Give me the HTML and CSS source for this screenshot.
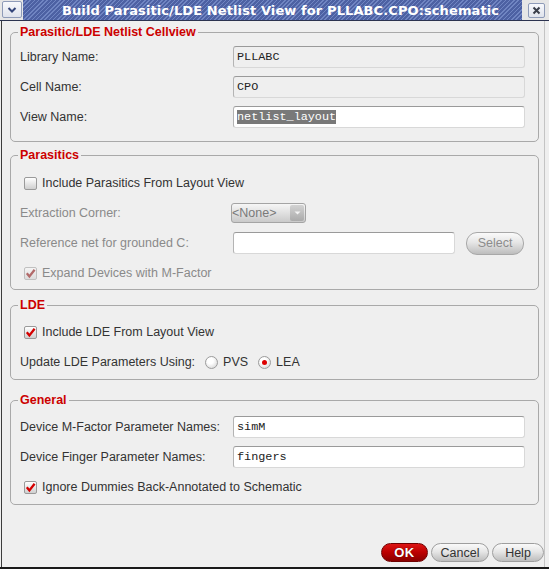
FILE: index.html
```html
<!DOCTYPE html>
<html>
<head>
<meta charset="utf-8">
<title>Build Parasitic/LDE Netlist View</title>
<link rel="stylesheet" href="styles.css">
</head>
<body>
<div class="window">
  <div class="titlebar">
    <div class="tb-btn menu-btn">
      <svg width="12" height="8" viewBox="0 0 12 8"><path d="M2.5 2 L6 5.5 L9.5 2" fill="none" stroke="#34467a" stroke-width="2"/></svg>
    </div>
    <div class="tb-band"><span class="tb-title">Build Parasitic/LDE Netlist View for PLLABC.CPO:schematic</span></div>
    <div class="tb-btn close-btn">
      <svg width="9" height="9" viewBox="0 0 9 9"><path d="M1.5 1.5 L7.5 7.5 M7.5 1.5 L1.5 7.5" fill="none" stroke="#3a3f4a" stroke-width="2"/></svg>
    </div>
  </div>

  <div class="content">
    <fieldset class="group g1">
      <legend>Parasitic/LDE Netlist Cellview</legend>
      <div class="row"><span class="label">Library Name:</span><div class="field readonly">PLLABC</div></div>
      <div class="row"><span class="label">Cell Name:</span><div class="field readonly">CPO</div></div>
      <div class="row"><span class="label">View Name:</span><div class="field"><span class="sel">netlist_layout</span></div></div>
    </fieldset>

    <fieldset class="group g2">
      <legend>Parasitics</legend>
      <div class="row">
        <span class="check"></span><span class="check-text">Include Parasitics From Layout View</span>
      </div>
      <div class="row disabled">
        <span class="label">Extraction Corner:</span>
        <div class="combo"><span class="combo-text">&lt;None&gt;</span><span class="combo-arrow"><svg width="7" height="4" viewBox="0 0 7 4"><path d="M0.5 0.5 L6.5 0.5 L3.5 3.5 Z" fill="#f4f4f4"/></svg></span></div>
      </div>
      <div class="row disabled">
        <span class="label">Reference net for grounded C:</span>
        <div class="field short"></div>
        <div class="pill select-btn">Select</div>
      </div>
      <div class="row disabled">
        <span class="check checked faded"><svg width="11" height="11" viewBox="0 0 11 11"><path d="M1.8 5.2 L4.4 8.4 L9.6 1.8" fill="none" stroke="#b26a6a" stroke-width="2.3"/></svg></span><span class="check-text">Expand Devices with M-Factor</span>
      </div>
    </fieldset>

    <fieldset class="group g3">
      <legend>LDE</legend>
      <div class="row">
        <span class="check checked"><svg width="11" height="11" viewBox="0 0 11 11"><path d="M1.8 5.2 L4.4 8.4 L9.6 1.8" fill="none" stroke="#d40000" stroke-width="2.3"/></svg></span><span class="check-text">Include LDE From Layout View</span>
      </div>
      <div class="row">
        <span class="inline-label">Update LDE Parameters Using:</span>
        <span class="radio"></span><span class="radio-text">PVS</span>
        <span class="radio on"></span><span class="radio-text">LEA</span>
      </div>
    </fieldset>

    <fieldset class="group g4">
      <legend>General</legend>
      <div class="row"><span class="label">Device M-Factor Parameter Names:</span><div class="field">simM</div></div>
      <div class="row"><span class="label">Device Finger Parameter Names:</span><div class="field">fingers</div></div>
      <div class="row">
        <span class="check checked"><svg width="11" height="11" viewBox="0 0 11 11"><path d="M1.8 5.2 L4.4 8.4 L9.6 1.8" fill="none" stroke="#d40000" stroke-width="2.3"/></svg></span><span class="check-text">Ignore Dummies Back-Annotated to Schematic</span>
      </div>
    </fieldset>

    <div class="buttons">
      <div class="pill ok-btn">OK</div>
      <div class="pill cancel-btn">Cancel</div>
      <div class="pill help-btn">Help</div>
    </div>
  </div>
</div>
</body>
</html>
```

FILE: styles.css
```css
html, body {
  margin: 0;
  padding: 0;
  background: #efefef;
}

.window {
  width: 549px;
  height: 569px;
  display: flex;
  flex-direction: column;
  box-sizing: border-box;
  border-bottom: 2px solid #1a1a1a;
  font-family: "Liberation Sans", Arial, sans-serif;
  font-size: 12.5px;
  color: #333333;
}

/* ---------- title bar ---------- */
.titlebar {
  height: 20px;
  display: flex;
  align-items: stretch;
  background: #e6e6e6;
  border-bottom: 1px solid #2c3350;
  flex: none;
}

.tb-btn {
  box-sizing: border-box;
  display: flex;
  align-items: center;
  justify-content: center;
  border: 1px solid #8e9bb8;
  border-radius: 2px;
  background: linear-gradient(#f8f9fc, #dfe3ec);
}

.menu-btn {
  width: 20px;
  height: 17px;
  margin: 1px 1px 0 2px;
}

.close-btn {
  width: 17px;
  height: 15px;
  margin: 3px 4px 0 6px;
}

.tb-band {
  flex: 1;
  background: repeating-linear-gradient(135deg, #4d61a3 0 1.9px, #7085c2 1.9px 3px);
  display: flex;
  align-items: center;
  padding-left: 39px;
}

.tb-title {
  font-family: "DejaVu Sans", sans-serif;
  font-weight: bold;
  font-size: 13px;
  letter-spacing: 0.1px;
  color: #ffffff;
  white-space: nowrap;
  padding-top: 1px;
}

/* ---------- content ---------- */
.content {
  flex: 1;
  display: flex;
  flex-direction: column;
  margin-left: 1px;
  border-left: 1px solid #3c3c3c;
  margin-right: 4px;
  border-right: 1px solid #c4c4c4;
  padding: 4px 5px 5px 8px;
}

.group {
  margin: 0;
  border: 1px solid #a9a9a9;
  border-radius: 5px;
  padding: 4px 12px 2px 9px;
}

.group legend {
  font-weight: bold;
  color: #cc0000;
  line-height: 15px;
  padding: 0 2px;
  margin-left: -2px;
}

.g1 { padding-top: 2px; padding-bottom: 9px; }
.g2 { margin-top: 6px; padding-top: 5px; padding-bottom: 1px; }
.g3 { margin-top: 8px; }
.g4 { margin-top: 13px; }

.row {
  height: 30px;
  display: flex;
  align-items: center;
  white-space: nowrap;
}

.label {
  width: 213px;
  flex: none;
}

.disabled {
  color: #8a8a8a;
}

/* ---------- text fields ---------- */
.field {
  box-sizing: border-box;
  width: 292px;
  height: 22px;
  background: #ffffff;
  border: 1px solid #d8d8d8;
  border-top-color: #9a9a9a;
  border-left-color: #b4b4b4;
  border-radius: 3px;
  padding: 0 3px;
  font-family: "Liberation Mono", "Courier New", monospace;
  font-size: 11.8px;
  line-height: 20px;
  color: #222222;
}

.field.readonly {
  background: #efefef;
}

.field.short {
  width: 222px;
}

.sel {
  background: #797979;
  color: #ffffff;
}

/* ---------- checkbox ---------- */
.check {
  box-sizing: border-box;
  width: 13px;
  height: 13px;
  margin-left: 4px;
  margin-right: 5px;
  border: 1px solid #9a9a9a;
  border-radius: 2px;
  background: linear-gradient(#ffffff, #cfcfcf);
  display: flex;
  align-items: center;
  justify-content: center;
  flex: none;
}

.check.faded {
  border-color: #c0c0c0;
  background: linear-gradient(#f4f4f4, #dcdcdc);
}

/* ---------- radio ---------- */
.inline-label {
  margin-right: 10px;
}

.radio {
  box-sizing: border-box;
  width: 13px;
  height: 13px;
  border-radius: 50%;
  border: 1px solid #9c9c9c;
  background: radial-gradient(circle at 40% 35%, #ffffff 30%, #cdcdcd 100%);
  margin-right: 5px;
  display: flex;
  align-items: center;
  justify-content: center;
  flex: none;
}

.radio.on::after {
  content: "";
  width: 5px;
  height: 5px;
  border-radius: 50%;
  background: #dd0000;
}

.radio-text {
  margin-right: 10px;
}

/* ---------- combo ---------- */
.combo {
  box-sizing: border-box;
  width: 75px;
  height: 20px;
  margin-left: -2px;
  border: 1px solid #a4a4a4;
  border-radius: 3px;
  background: linear-gradient(#f6f6f6, #cacaca);
  display: flex;
  align-items: center;
  justify-content: space-between;
  padding: 0 1px 0 0;
}

.combo-text {
  color: #7a7a7a;
  line-height: 16px;
}

.combo-arrow {
  width: 14px;
  height: 16px;
  border-radius: 2px;
  background: linear-gradient(#d2d2d2, #aaaaaa);
  display: flex;
  align-items: center;
  justify-content: center;
}

/* ---------- pill buttons ---------- */
.pill {
  box-sizing: border-box;
  height: 19px;
  border-radius: 10px;
  border: 1px solid #9e9e9e;
  background: linear-gradient(#fafafa, #e6e6e6 45%, #bdbdbd);
  display: flex;
  align-items: center;
  justify-content: center;
  color: #333333;
}

.select-btn {
  width: 58px;
  height: 23px;
  margin-left: 11px;
  border-radius: 11px;
  color: #8c8c8c;
  border-color: #a8a8a8;
}

.buttons {
  margin-top: auto;
  margin-right: -5px;
  display: flex;
  justify-content: flex-end;
  gap: 3px;
}

.ok-btn {
  width: 47px;
  background: linear-gradient(#dd1414, #bb0000 50%, #880000);
  border-color: #700000;
  color: #ffffff;
  font-weight: bold;
  font-size: 13px;
  letter-spacing: 0.5px;
  text-shadow: 0 0 1px #400000;
}

.cancel-btn {
  width: 58px;
}

.help-btn {
  width: 52px;
}
```
